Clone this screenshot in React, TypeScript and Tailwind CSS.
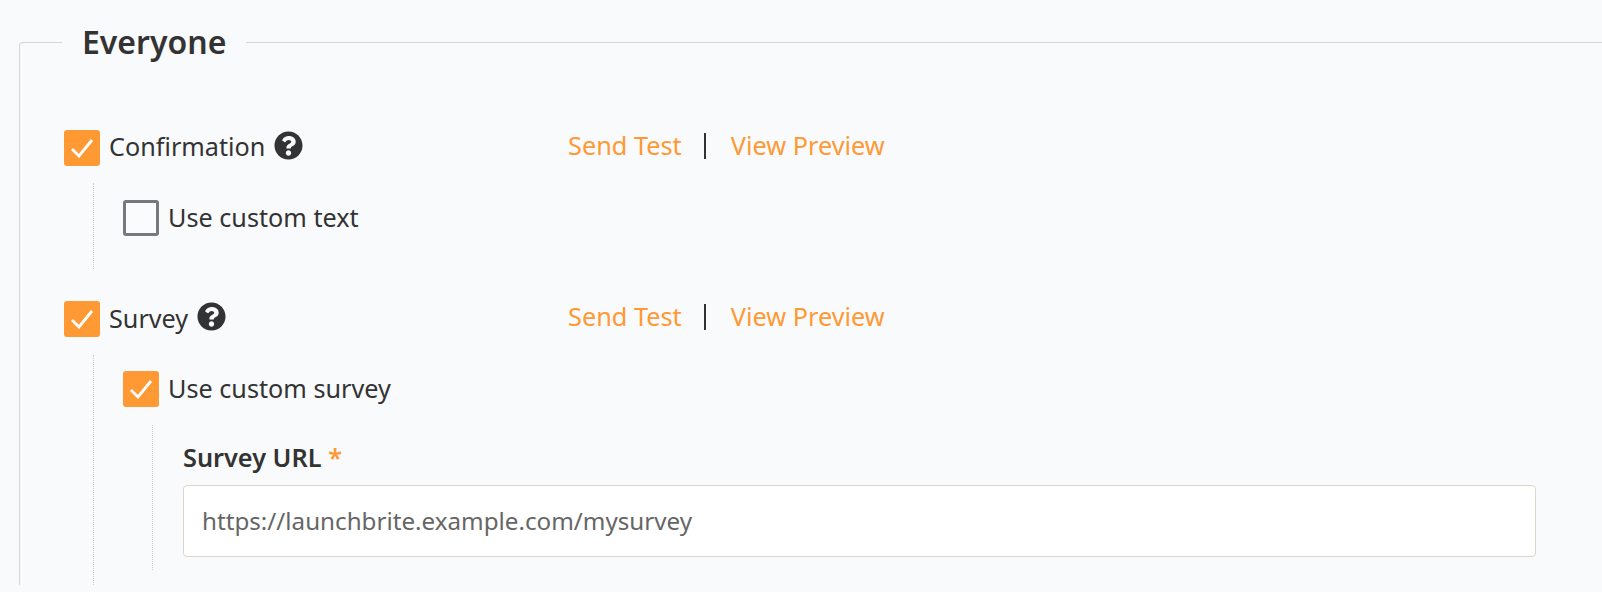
import React from "react";

// Check box, filled orange when on
function Check({ on }: { on: boolean }) {
  if (!on) {
    return <span className="block h-9 w-9 shrink-0 rounded-[3px] border-[3px] border-[#77777c] bg-[#fafbfd]" />;
  }
  return (
    <span className="flex h-9 w-9 shrink-0 items-center justify-center rounded-[3px] bg-[#ff9933]">
      <svg width="24" height="20" viewBox="0 0 24 20" fill="none">
        <path d="M2 11l7 7L22 2" stroke="#fff" strokeWidth="2.8" />
      </svg>
    </span>
  );
}

function HelpIcon() {
  return (
    <svg width="29" height="29" viewBox="0 0 512 512" className="ml-[9px] -mt-[5px] shrink-0" fill="#333">
      <path d="M504 256c0 137-111 248-248 248S8 393 8 256 119 8 256 8s248 111 248 248zM263 90c-54 0-89 23-116 64-4 5-3 12 3 16l35 26c5 4 13 3 17-2 18-23 30-36 57-36 20 0 45 13 45 32 0 15-12 22-32 33-23 13-54 30-54 71v4c0 7 5 12 12 12h56c7 0 12-5 12-12v-2c0-29 85-30 85-108 0-59-61-98-120-98zm-7 251c-26 0-47 21-47 47s21 47 47 47 47-21 47-47-21-47-47-47z" />
    </svg>
  );
}

function Links() {
  return (
    <div className="flex items-center text-[25.3px] leading-[36px] -mt-[7px]">
      <a className="text-[#ff9933]">Send Test</a>
      <span className="ml-[22px] mr-[25px] mt-[3px] h-[26px] w-[2px] bg-[#333]" />
      <a className="text-[#ff9933]">View Preview</a>
    </div>
  );
}

export default function App() {
  return (
    <div className="h-[592px] overflow-hidden bg-[#f9fafc] pl-[19px] pt-[25px] font-['Noto_Sans',sans-serif] text-[#333]">
      <fieldset className="w-[1700px] rounded-tl-[4px] border-l border-t border-[#d5d6d8] pl-[44px]">
        <legend className="-ml-[2px] px-5 text-[32px] leading-[34px] font-semibold">Everyone</legend>

        {/* Confirmation */}
        <div className="mt-[71px] flex h-9 items-center">
          <div className="flex w-[504px] items-center">
            <Check on />
            <span className="ml-[9px] -mt-[5px] text-[25.2px] leading-[36px]">Confirmation</span>
            <HelpIcon />
          </div>
          <Links />
        </div>
        <div className="mt-[17px] ml-[29px] h-[86px] border-l border-dotted border-[#ccced1] pl-[29px] pt-[17px]">
          <div className="flex h-9 items-center">
            <Check on={false} />
            <span className="ml-[9px] -mt-[2px] text-[25.2px] leading-[36px]">Use custom text</span>
          </div>
        </div>

        {/* Survey */}
        <div className="mt-[32px] flex h-9 items-center">
          <div className="flex w-[504px] items-center">
            <Check on />
            <span className="ml-[9px] -mt-[2px] text-[25.2px] leading-[36px]">Survey</span>
            <HelpIcon />
          </div>
          <Links />
        </div>
        <div className="mt-[18px] ml-[29px] h-[230px] border-l border-dotted border-[#ccced1] pl-[29px] pt-[16px]">
          <div className="flex h-9 items-center">
            <Check on />
            <span className="ml-[9px] -mt-[2px] text-[25.2px] leading-[36px]">Use custom survey</span>
          </div>
          <div className="mt-[18px] ml-[29px] h-[145px] border-l border-dotted border-[#ccced1] pl-[30px] pt-[14px]">
            <label className="block text-[25.3px] leading-[36px] font-semibold">
              Survey URL <span className="text-[#ff9933]">*</span>
            </label>
            <input
              readOnly
              value="https://launchbrite.example.com/mysurvey"
              className="mt-[10px] block h-[72px] w-[1353px] rounded-[4px] border border-[#dcd6c9] bg-white px-[18px] pb-[2px] text-[24.2px] text-[#666] outline-none"
            />
          </div>
        </div>
      </fieldset>
    </div>
  );
}
